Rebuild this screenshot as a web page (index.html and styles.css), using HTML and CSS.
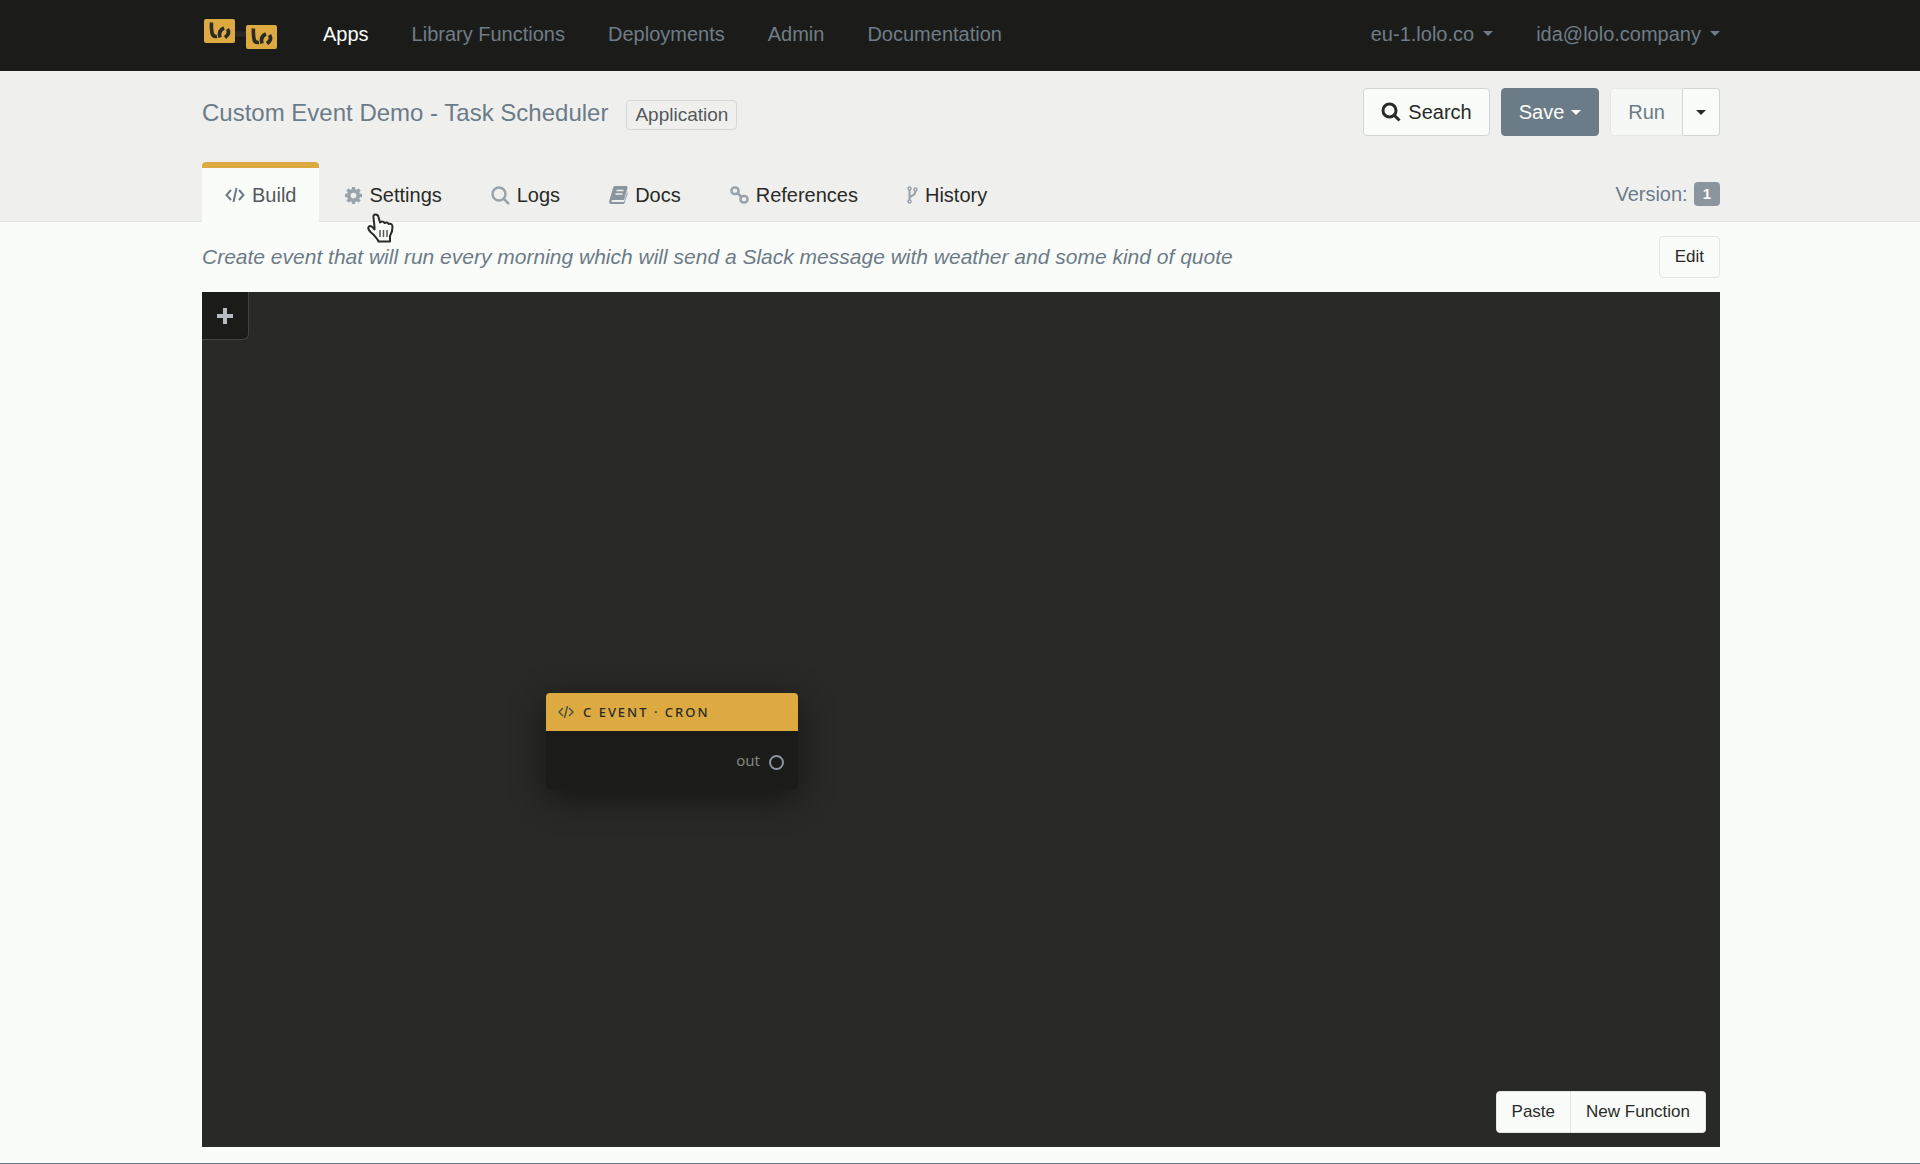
FILE: index.html
```html
<!DOCTYPE html>
<html lang="en">
<head>
<meta charset="utf-8">
<meta name="viewport" content="width=device-width, initial-scale=1">
<title>Custom Event Demo - Task Scheduler</title>
<link rel="stylesheet" href="styles.css">
</head>
<body>
<header class="topbar">
  <div class="container topbar-row">
    <a class="logo" href="#" aria-label="Lolo home">
      <svg width="77" height="32" viewBox="0 0 77 32">
        <path d="M32 16h14" stroke="#292a27" stroke-width="5"/>
        <g id="tile">
          <rect x="2" y="1" width="31" height="24" rx="2" fill="#dcaa40"/>
          <path d="M9.500 4.500q-.5 4 .5 10.500.5 4 5 3.500M18 19.500q-2-7 4-9.500M25.500 11q3 4.500-2.500 8.500" fill="none" stroke="#292a27" stroke-width="3.600"/>
        </g>
        <use href="#tile" x="42" y="6"/>
      </svg>
    </a>
    <nav class="nav">
      <a class="current" href="#">Apps</a>
      <a href="#">Library Functions</a>
      <a href="#">Deployments</a>
      <a href="#">Admin</a>
      <a href="#">Documentation</a>
    </nav>
    <nav class="nav account">
      <a href="#">eu-1.lolo.co <span class="caret"></span></a>
      <a href="#">ida@lolo.company <span class="caret"></span></a>
    </nav>
  </div>
</header>

<section class="subhead">
  <div class="container">
    <div class="title-row">
      <h1>Custom Event Demo - Task Scheduler</h1>
      <span class="tag">Application</span>
      <div class="actions">
        <button class="btn" type="button">
          <svg width="20" height="20" viewBox="0 0 20 20" fill="none" stroke="#292a27" stroke-width="3"><circle cx="8.500" cy="8.500" r="6.500"/><path d="M13 13l5.500 5.500"/></svg>
          Search
        </button>
        <button class="btn primary" type="button">Save <span class="caret"></span></button>
        <div class="group">
          <button class="btn run" type="button">Run</button>
          <button class="btn more" type="button" aria-label="Run options"><span class="caret"></span></button>
        </div>
      </div>
    </div>
    <div class="tab-row">
      <nav class="tabs">
        <a class="tab active" href="#">
          <svg width="20" height="16" viewBox="0 0 20 16" fill="none" stroke="#6c7b88" stroke-width="2"><path d="M6 3L1.500 8L6 13M14 3l4.500 5L14 13M11.500 1l-3 14"/></svg>
          Build
        </a>
        <a class="tab" href="#">
          <svg width="17" height="17" viewBox="0 0 18 18" fill="none" stroke="#9aa3a9"><circle cx="9" cy="9" r="5" stroke-width="4"/><path d="M9 0v3M9 15v3M0 9h3M15 9h3M2.600 2.600l2.200 2.200M13.200 13.200l2.200 2.200M2.600 15.400l2.200-2.200M13.200 4.800l2.200-2.200" stroke-width="3.500"/></svg>
          Settings
        </a>
        <a class="tab" href="#">
          <svg width="19" height="19" viewBox="0 0 19 19" fill="none" stroke="#9aa3a9" stroke-width="2.500"><circle cx="8" cy="8" r="6.500"/><path d="M12.500 12.500l5.500 5.500"/></svg>
          Logs
        </a>
        <a class="tab" href="#">
          <svg width="19" height="18" viewBox="0 0 19 18"><path d="M6 0h11q2 0 1.500 2l-3.500 12H3.500q-1 0-1 1t1 1H15l3.500-11v3L15.500 17q-.5 1-1.500 1H3q-4 0-2.500-4L4 2q.5-2 2-2z" fill="#8b959d"/><path d="M7.500 4.500h7M6.500 8h7" stroke="#eff0ee" stroke-width="1.500"/></svg>
          Docs
        </a>
        <a class="tab" href="#">
          <svg width="19" height="18" viewBox="0 0 19 18" fill="none" stroke="#9aa3a9" stroke-width="2.600"><rect x="1.500" y="1.500" width="7" height="6.500" rx="3"/><rect x="10.500" y="10" width="7" height="6.500" rx="3"/><path d="M7 6.500l5 5"/></svg>
          References
        </a>
        <a class="tab" href="#">
          <svg width="11" height="18" viewBox="0 0 11 18" fill="none" stroke="#9aa3a9"><g stroke-width="1.500"><circle cx="2.500" cy="2.500" r="1.500"/><circle cx="2.500" cy="15.500" r="1.500"/><circle cx="8.500" cy="3.500" r="1.500"/></g><path d="M2.500 4v10M8.500 5q0 3-3 4.500Q2.500 10.500 2.500 13" stroke-width="2"/></svg>
          History
        </a>
      </nav>
      <div class="version">Version: <span class="badge">1</span></div>
    </div>
  </div>
  <svg class="pointer" width="28" height="31" viewBox="0 0 28 31"><path d="M7.500 14L6.500 4.500Q6 1.500 8.500 1.500t3 2.500l1.500 5.500q3-2 4.500.5 3-1.500 4 1 4-1 4 3 0 5-2.500 9v5.500H11.500Q9.500 24 3.500 19 0 15 2 13.500t5.500 3z" fill="#fafcf9" stroke="#292a27" stroke-width="2" stroke-linejoin="round"/><path d="M13 17v7M16.500 17v7M20 17v7" stroke="#53585a" stroke-width="1.500"/></svg>
</section>

<main class="container main">
  <div class="about">
    <p>Create event that will run every morning which will send a Slack message with weather and some kind of quote</p>
    <button class="btn small" type="button">Edit</button>
  </div>
  <div class="canvas">
    <button class="add" type="button" aria-label="Add">
      <svg width="16" height="16" viewBox="0 0 16 16" stroke="#b6bcc0" stroke-width="4"><path d="M8 0v16M0 8h16"/></svg>
    </button>
    <article class="node">
      <h2>
        <svg width="16" height="12" viewBox="0 0 16 12" fill="none" stroke="#53503f" stroke-width="1.500"><path d="M5 2L1 6l4 4M11 2l4 4-4 4M9.500 0l-3 12"/></svg>
        C EVENT · CRON
      </h2>
      <div class="port">out <span class="socket"></span></div>
    </article>
    <div class="group canvas-actions">
      <button class="btn small" type="button">Paste</button>
      <button class="btn small" type="button">New Function</button>
    </div>
  </div>
</main>
</body>
</html>
```
FILE: styles.css
```css
* {
  box-sizing: border-box;
}

body {
  margin: 0;
  min-height: 100vh;
  display: flex;
  flex-direction: column;
  background: #fafcf9;
  border-bottom: 1px solid #6c7b88;
  color: #292a27;
  font: 20px/24px "Liberation Sans", Arial, sans-serif;
}

a {
  color: inherit;
  text-decoration: none;
}

svg {
  flex: none;
}

.container {
  width: 100%;
  max-width: 1520px;
  margin: 0 auto;
  padding-left: 2px;
}

.caret {
  display: inline-block;
  border: 5px solid transparent;
  border-top-color: currentColor;
  border-bottom: 0;
}

/* Top bar */
.topbar {
  background: #1b1c19;
  color: #6f7c87;
}

.topbar-row {
  display: flex;
  align-items: center;
  height: 71px;
  padding-bottom: 4px;
}

.logo {
  display: flex;
  margin-right: 44px;
}

.nav {
  display: flex;
  gap: 43px;
}

.nav a {
  display: flex;
  align-items: center;
  gap: 9px;
}

.nav .current {
  color: #fafcf9;
}

.account {
  margin-left: auto;
}

/* Title, actions and tabs */
.subhead {
  position: relative;
  background: #eff0ee;
  border-bottom: 1px solid #e4e6e4;
  padding-top: 17px;
}

.title-row {
  display: flex;
  align-items: center;
  gap: 18px;
}

h1 {
  margin: 2px 0 0;
  font-size: 24px;
  font-weight: 400;
  color: #6c7b88;
}

.tag {
  padding: 2px 8px;
  margin-top: 5px;
  border: 1px solid #d4d8d6;
  border-radius: 4px;
  font-size: 19px;
  color: #53585a;
}

.actions {
  display: flex;
  gap: 11px;
  margin-left: auto;
}

.btn {
  display: flex;
  align-items: center;
  justify-content: center;
  gap: 7px;
  height: 48px;
  padding: 0 17px;
  border: 1px solid #d0d4d2;
  border-radius: 4px;
  background: #fafcf9;
  color: #292a27;
  font: inherit;
}

.primary {
  background: #6c7b88;
  border-color: #6c7b88;
  color: #fafcf9;
}

.group {
  display: flex;
}

.group .btn:first-child {
  border-radius: 4px 0 0 4px;
}

.group .btn:last-child {
  border-left: 0;
  border-radius: 0 4px 4px 0;
}

.run {
  background: #f6f8f6;
  border-color: #e4e7e5;
  border-right-color: #d0d4d2;
  color: #6c7b88;
}

.more {
  padding: 0 13px;
}

.tab-row {
  display: flex;
  align-items: flex-end;
  justify-content: space-between;
  margin: 26px 0 -1px;
}

.tabs {
  display: flex;
  gap: 3px;
}

.tab {
  display: flex;
  align-items: center;
  gap: 7px;
  height: 60px;
  padding: 0 23px;
  border-top: 6px solid transparent;
}

.active {
  border-top-color: #dcaa40;
  border-radius: 4px 4px 0 0;
  background: #fafcf9;
  color: #53585a;
}

.version {
  display: flex;
  align-items: center;
  gap: 6px;
  padding-bottom: 16px;
  color: #6c7b88;
}

.badge {
  padding: 0 9px;
  border-radius: 4px;
  background: #8a959e;
  color: #fafcf9;
  font-size: 15px;
  font-weight: 700;
}

.pointer {
  position: absolute;
  left: 367px;
  top: 142px;
}

/* Description */
.main {
  flex: 1;
  display: flex;
  flex-direction: column;
  padding-bottom: 16px;
}

.about {
  display: flex;
  align-items: center;
  justify-content: space-between;
  padding: 14px 0;
}

.about p {
  margin: 0;
  font-size: 21px;
  font-style: italic;
  color: #6c7b88;
}

.small {
  height: 42px;
  padding: 0 15px;
  border-color: #e2e5e3;
  font-size: 17px;
}

/* Flow canvas */
.canvas {
  position: relative;
  flex: 1;
  min-height: 600px;
  background: #292a27;
}

.add {
  display: flex;
  align-items: center;
  justify-content: center;
  width: 47px;
  height: 48px;
  padding: 0;
  border: solid #42443f;
  border-width: 0 1px 1px 0;
  border-radius: 0 0 6px 0;
  background: #1b1c19;
}

.node {
  position: absolute;
  left: 344px;
  top: 401px;
  width: 252px;
  border-radius: 4px;
  background: #1b1c19;
  box-shadow: 0 8px 32px #141512;
}

.node h2 {
  display: flex;
  align-items: center;
  gap: 9px;
  height: 38px;
  margin: 0;
  padding: 0 12px;
  border-radius: 4px 4px 0 0;
  background: #dcaa40;
  font: 500 13px/20px "Noto Sans", sans-serif;
  letter-spacing: 2px;
}

.port {
  display: flex;
  align-items: center;
  justify-content: flex-end;
  gap: 9px;
  height: 58px;
  padding: 0 14px;
  color: #85857f;
  font: 15px/20px "Noto Sans", sans-serif;
}

.socket {
  width: 15px;
  height: 15px;
  margin-top: 4px;
  border: 2px solid #8a959e;
  border-radius: 50%;
}

.canvas-actions {
  position: absolute;
  right: 14px;
  bottom: 14px;
}
```
